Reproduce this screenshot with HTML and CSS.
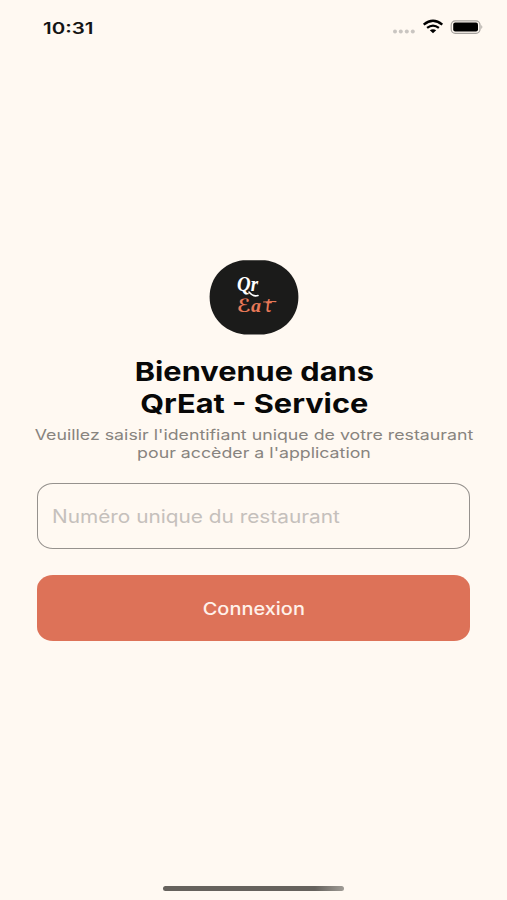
FILE: index.html
```html
<!DOCTYPE html>
<html lang="fr">
<head>
    <meta charset="UTF-8">
    <meta name="viewport" content="width=device-width, initial-scale=1.0">
    <title>QrEat - Service</title>
    <link rel="stylesheet" href="styles.css">
</head>
<body>
    <header class="status-bar">
        <span class="time">10:31</span>
        <svg class="status-icons" width="92" height="18" viewBox="0 0 92 18">
            <g fill="#c9c5c1">
                <circle cx="4" cy="12.5" r="2"/>
                <circle cx="9.8" cy="12.5" r="2"/>
                <circle cx="15.8" cy="12.5" r="2"/>
                <circle cx="21.8" cy="12.5" r="2"/>
            </g>
            <g fill="none" stroke="#000" stroke-width="2.3">
                <path d="M32.7 5.7Q42 -2.1 51.3 5.7"/>
                <path d="M36.1 8.9Q42 4.3 47.9 8.9"/>
            </g>
            <path d="M38.8 11.2Q42 9.2 45.2 11.2L42 14.3Z"/>
            <rect x="60.2" y="1.9" width="28.8" height="12.4" rx="4" fill="none" stroke="#a5a19d" stroke-width="1.2"/>
            <rect x="62.2" y="3.6" width="24.8" height="9" rx="2"/>
            <path d="M90.4 6.1Q92.2 7.8 90.4 9.9Z" fill="#a5a19d"/>
        </svg>
    </header>

    <main class="login">
        <svg class="logo" width="90" height="76" viewBox="0 0 90 76">
            <path d="M34 1.2H56C75 3.5 89.4 18 89.4 38S75 73 55 75.4H35C15 73 .6 58 .6 38S15 3.5 34 1.2Z" fill="#1b1b1a"/>
            <text class="logo-qr" x="28" y="32" textLength="21" lengthAdjust="spacingAndGlyphs">Qr</text>
            <path d="M40 33Q44 38 49 36.5" fill="none" stroke="#fff" stroke-width="1.6" stroke-linecap="round"/>
            <text class="logo-eat logo-e" x="28" y="53" textLength="14" lengthAdjust="spacingAndGlyphs">ℰ</text>
            <text class="logo-eat" x="42" y="53" textLength="10" lengthAdjust="spacingAndGlyphs">a</text>
            <text class="logo-eat logo-t" x="56" y="53">t</text>
            <path d="M54.5 43Q60 42.4 67 42.6" fill="none" stroke="#e97958" stroke-width="1.1" stroke-linecap="round"/>
        </svg>

        <h1 class="title">Bienvenue dans<br>QrEat - Service</h1>
        <p class="subtitle">Veuillez saisir l'identifiant unique de votre restaurant<br>pour accèder a l'application</p>

        <div class="field">
            <span class="placeholder">Numéro unique du restaurant</span>
        </div>
        <button class="submit" type="button"><span class="submit-label">Connexion</span></button>
    </main>

    <div class="home-indicator"></div>
</body>
</html>
```

FILE: styles.css
```css
* {
    box-sizing: border-box;
}
body {
    margin: 0;
    height: 900px;
    overflow: hidden;
    display: flex;
    flex-direction: column;
    align-items: center;
    background: #fff9f2;
    font-family: Inter, "Liberation Sans", sans-serif;
}
.status-bar {
    width: 100%;
    height: 55px;
    padding: 0 24px 0 43px;
    display: flex;
    align-items: center;
    justify-content: space-between;
}
.time {
    font-size: 16px;
    font-weight: 600;
    color: #151515;
    transform: scaleX(1.28);
    transform-origin: left;
}
.login {
    width: 433px;
    margin-top: 204px;
    display: flex;
    flex-direction: column;
    align-items: center;
}
.logo {
    display: block;
}
.logo-qr {
    font-family: "Liberation Serif", serif;
    font-size: 20px;
    font-style: italic;
    font-weight: 700;
    fill: #fff;
}
.logo-eat {
    font-family: "Liberation Serif", serif;
    font-size: 18px;
    font-style: italic;
    font-weight: 700;
    fill: #e97958;
}
.logo-e {
    font-family: "DejaVu Sans", sans-serif;
    font-style: normal;
}
.logo-t {
    font-family: Lato, sans-serif;
    font-size: 20px;
    font-weight: 400;
}
/* the type is wider than regular Inter */
.title {
    margin: 21px 0 0;
    padding-left: 1px;
    font-size: 26px;
    font-weight: 700;
    line-height: 32px;
    color: #080808;
    text-align: center;
    white-space: nowrap;
    transform: scaleX(1.182);
}
.subtitle {
    margin: 6px 0 0;
    font-size: 14.5px;
    line-height: 18px;
    color: #88847f;
    text-align: center;
    white-space: nowrap;
    transform: scaleX(1.225);
}
.field {
    width: 100%;
    height: 66px;
    margin-top: 21px;
    padding: 0 14px;
    display: flex;
    align-items: center;
    border: 1.4px solid #96928e;
    border-radius: 16px / 14px;
}
.placeholder {
    font-size: 18px;
    color: #c5c0bc;
    white-space: nowrap;
    transform: scaleX(1.156);
    transform-origin: left;
}
.submit {
    width: 100%;
    height: 66px;
    margin-top: 26px;
    border: 0;
    border-radius: 16px / 14px;
    background: #dd7258;
    color: #fff1ea;
    font-family: inherit;
}
.submit-label {
    display: inline-block;
    font-size: 17.5px;
    font-weight: 500;
    transform: scaleX(1.14);
}
.home-indicator {
    width: 181px;
    height: 5px;
    margin-top: auto;
    margin-bottom: 9px;
    border-radius: 3px;
    background: linear-gradient(to right, #66625d 84%, #a09c96);
}
```
